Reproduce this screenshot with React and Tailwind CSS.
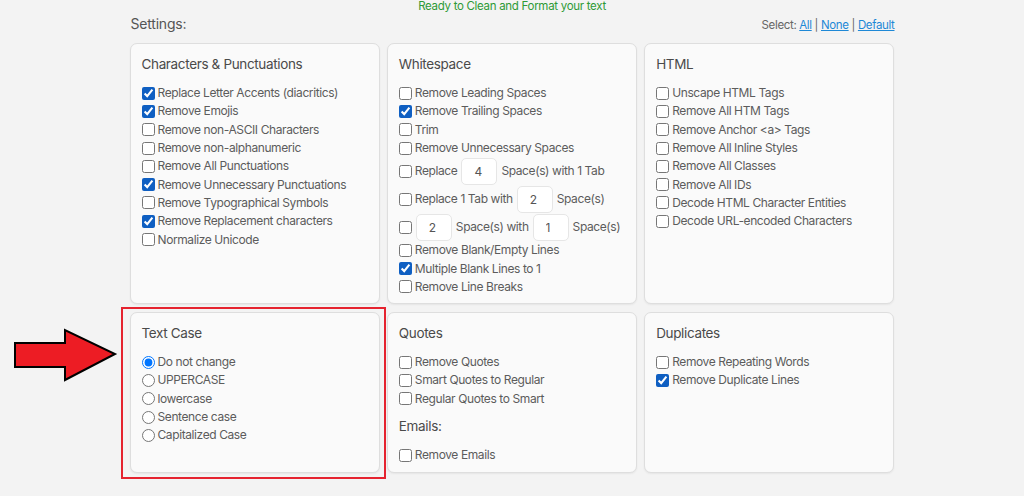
import { useState } from 'react';

const Check = ({ label, checked }) => (
  <label className="flex items-center h-[18.3px] gap-[3px] whitespace-nowrap">
    <input type="checkbox" defaultChecked={checked} className="w-[13px] h-[13px] accent-[#0f5fc2]" />
    <span>{label}</span>
  </label>
);

const Radio = ({ label, checked }) => (
  <label className="flex items-center h-[18.3px] gap-[3px] whitespace-nowrap">
    <input type="radio" name="textcase" defaultChecked={checked} className="w-[13px] h-[13px] accent-[#0075ff]" />
    <span>{label}</span>
  </label>
);

const NumBox = ({ value }) => (
  <input
    type="text"
    defaultValue={value}
    className="w-[36px] h-[27px] mx-[1px] px-[12px] rounded-[5px] border border-[#e6e6e6] bg-white text-[12px] text-[#555] outline-none"
  />
);

const Card = ({ title, children }) => (
  <div className="h-full bg-[#fafafa] border border-[#dedede] rounded-[7px] shadow-[0_1px_2px_rgba(0,0,0,0.06)] px-[11px] pt-[10px]">
    <h3 className="text-[13.5px] tracking-[-0.35px] text-[#4a4a4a] leading-[20px] mb-[10px]">{title}</h3>
    <div className="text-[12px] tracking-[-0.4px] text-[#5c5c5c]">{children}</div>
  </div>
);

const App = () => {
  const [mode] = useState('settings');

  return (
    <div className="relative w-[1024px] h-[496px] bg-[#f3f3f3] overflow-hidden font-['Inter',sans-serif]">
      <div className="w-[765px] mx-auto">
        <p className="text-center text-[11.5px] tracking-[-0.3px] text-[#2e9a36] leading-[12px] h-[11px]">
          Ready to Clean and Format your text
        </p>
        <div className="flex justify-between items-end h-[22px] mt-[1px]">
          <h2 className="text-[14px] tracking-[-0.2px] text-[#555] leading-[20px] pl-[1px]">Settings:</h2>
          <div className="text-[11.5px] tracking-[-0.35px] text-[#666] leading-[16px] pb-[1px]">
            Select: <a className="text-[#1e88d6] underline">All</a> |{' '}
            <a className="text-[#1e88d6] underline">None</a> |{' '}
            <a className="text-[#1e88d6] underline">Default</a>
          </div>
        </div>

        {mode === 'settings' && (
          <div className="grid grid-cols-3 gap-x-[7px] gap-y-[8px] mt-[9px] grid-rows-[261px_161px]">
            <Card title="Characters & Punctuations">
              <Check label="Replace Letter Accents (diacritics)" checked />
              <Check label="Remove Emojis" checked />
              <Check label="Remove non-ASCII Characters" />
              <Check label="Remove non-alphanumeric" />
              <Check label="Remove All Punctuations" />
              <Check label="Remove Unnecessary Punctuations" checked />
              <Check label="Remove Typographical Symbols" />
              <Check label="Remove Replacement characters" checked />
              <Check label="Normalize Unicode" />
            </Card>

            <Card title="Whitespace">
              <Check label="Remove Leading Spaces" />
              <Check label="Remove Trailing Spaces" checked />
              <Check label="Trim" />
              <Check label="Remove Unnecessary Spaces" />
              <div className="flex items-center h-[28px] gap-[3px] whitespace-nowrap">
                <input type="checkbox" className="w-[13px] h-[13px] accent-[#0f5fc2]" />
                <span>Replace</span>
                <NumBox value="4" />
                <span>Space(s) with 1 Tab</span>
              </div>
              <div className="flex items-center h-[28px] gap-[3px] whitespace-nowrap">
                <input type="checkbox" className="w-[13px] h-[13px] accent-[#0f5fc2]" />
                <span>Replace 1 Tab with</span>
                <NumBox value="2" />
                <span>Space(s)</span>
              </div>
              <div className="flex items-center h-[28px] gap-[3px] whitespace-nowrap">
                <input type="checkbox" className="w-[13px] h-[13px] accent-[#0f5fc2]" />
                <NumBox value="2" />
                <span>Space(s) with</span>
                <NumBox value="1" />
                <span>Space(s)</span>
              </div>
              <Check label="Remove Blank/Empty Lines" />
              <Check label="Multiple Blank Lines to 1" checked />
              <Check label="Remove Line Breaks" />
            </Card>

            <Card title="HTML">
              <Check label="Unscape HTML Tags" />
              <Check label="Remove All HTM Tags" />
              <Check label="Remove Anchor <a> Tags" />
              <Check label="Remove All Inline Styles" />
              <Check label="Remove All Classes" />
              <Check label="Remove All IDs" />
              <Check label="Decode HTML Character Entities" />
              <Check label="Decode URL-encoded Characters" />
            </Card>

            <div className="relative">
              <Card title="Text Case">
                <Radio label="Do not change" checked />
                <Radio label="UPPERCASE" />
                <Radio label="lowercase" />
                <Radio label="Sentence case" />
                <Radio label="Capitalized Case" />
              </Card>
              {/* annotation box */}
              <div className="absolute left-[-9px] top-[-5px] w-[265px] h-[172px] border-2 border-[#e5232f] pointer-events-none" />
            </div>

            <Card title="Quotes">
              <Check label="Remove Quotes" />
              <Check label="Smart Quotes to Regular" />
              <Check label="Regular Quotes to Smart" />
              <p className="text-[13.5px] tracking-[-0.35px] text-[#4a4a4a] leading-[20px] mt-[8px] mb-[10px]">Emails:</p>
              <Check label="Remove Emails" />
            </Card>

            <Card title="Duplicates">
              <Check label="Remove Repeating Words" />
              <Check label="Remove Duplicate Lines" checked />
            </Card>
          </div>
        )}
      </div>

      {/* annotation arrow */}
      <svg className="absolute left-[13px] top-[328px]" width="106" height="54" viewBox="0 0 106 54">
        <polygon
          points="2,15 52,15 52,2 102,26 52,52 52,39 2,39"
          fill="#ed1c24"
          stroke="#000"
          strokeWidth="2"
          strokeLinejoin="miter"
        />
      </svg>
    </div>
  );
};

export default App;
